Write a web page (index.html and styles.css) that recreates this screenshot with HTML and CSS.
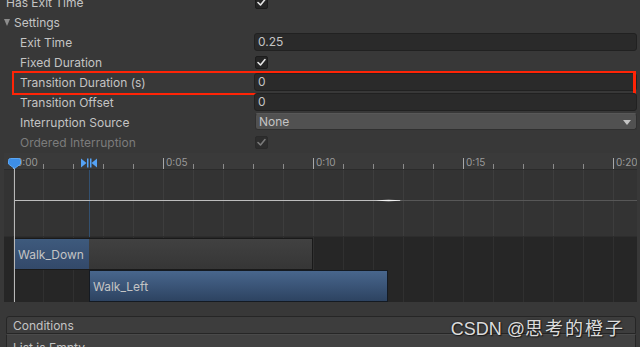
FILE: index.html
```html
<!DOCTYPE html>
<html lang="en">
<head>
    <meta charset="UTF-8">
    <title>Transition Inspector</title>
    <link rel="stylesheet" href="styles.css">
</head>
<body>
    <div class="inspector">
        <div class="row">
            <span class="label label-root">Has Exit Time</span>
            <span class="value">
                <span class="check"><svg width="11" height="11" viewBox="0 0 11 11"><polyline points="2,5.5 4.5,8 9,2.5" /></svg></span>
            </span>
        </div>
        <div class="row">
            <span class="label label-fold"><span class="fold"></span>Settings</span>
        </div>
        <div class="row">
            <span class="label">Exit Time</span>
            <span class="value"><span class="field">0.25</span></span>
        </div>
        <div class="row">
            <span class="label">Fixed Duration</span>
            <span class="value">
                <span class="check"><svg width="11" height="11" viewBox="0 0 11 11"><polyline points="2,5.5 4.5,8 9,2.5" /></svg></span>
            </span>
        </div>
        <div class="row highlight">
            <span class="label">Transition Duration (s)</span>
            <span class="value"><span class="field">0</span></span>
        </div>
        <div class="row">
            <span class="label">Transition Offset</span>
            <span class="value"><span class="field">0</span></span>
        </div>
        <div class="row">
            <span class="label">Interruption Source</span>
            <span class="value"><span class="dropdown">None<span class="caret"></span></span></span>
        </div>
        <div class="row disabled">
            <span class="label">Ordered Interruption</span>
            <span class="value">
                <span class="check"><svg width="11" height="11" viewBox="0 0 11 11"><polyline points="2,5.5 4.5,8 9,2.5" /></svg></span>
            </span>
        </div>
    </div>

    <div class="timeline">
        <div class="ruler">
            <svg width="633" height="16" viewBox="0 0 633 16">
                <g class="ticks">
                    <line x1="39.5" y1="11" x2="39.5" y2="16" />
                    <line x1="69.5" y1="11" x2="69.5" y2="16" />
                    <line x1="99.5" y1="11" x2="99.5" y2="16" />
                    <line x1="129.5" y1="11" x2="129.5" y2="16" />
                    <line x1="189.5" y1="11" x2="189.5" y2="16" />
                    <line x1="219.5" y1="11" x2="219.5" y2="16" />
                    <line x1="249.5" y1="11" x2="249.5" y2="16" />
                    <line x1="279.5" y1="11" x2="279.5" y2="16" />
                    <line x1="339.5" y1="11" x2="339.5" y2="16" />
                    <line x1="369.5" y1="11" x2="369.5" y2="16" />
                    <line x1="399.5" y1="11" x2="399.5" y2="16" />
                    <line x1="429.5" y1="11" x2="429.5" y2="16" />
                    <line x1="489.5" y1="11" x2="489.5" y2="16" />
                    <line x1="519.5" y1="11" x2="519.5" y2="16" />
                    <line x1="549.5" y1="11" x2="549.5" y2="16" />
                    <line x1="579.5" y1="11" x2="579.5" y2="16" />
                </g>
                <g class="majors">
                    <line x1="9.5" y1="5" x2="9.5" y2="16" />
                    <line x1="159.5" y1="5" x2="159.5" y2="16" />
                    <line x1="309.5" y1="5" x2="309.5" y2="16" />
                    <line x1="459.5" y1="5" x2="459.5" y2="16" />
                    <line x1="609.5" y1="5" x2="609.5" y2="16" />
                </g>
                <g class="tick-labels">
                    <text x="12" y="13">0:00</text>
                    <text x="162" y="13">0:05</text>
                    <text x="312" y="13">0:10</text>
                    <text x="462" y="13">0:15</text>
                    <text x="612" y="13">0:20</text>
                </g>
                <g class="marks">
                    <path d="M77 5.5 L82.5 10 L77 14.5 Z" />
                    <rect x="83" y="5.5" width="1.5" height="9" />
                    <rect x="86" y="5.5" width="1.5" height="9" />
                    <path d="M93 5.5 L87.5 10 L93 14.5 Z" />
                </g>
            </svg>
        </div>
        <div class="curve">
            <svg width="633" height="67" viewBox="0 0 633 67">
                <line class="blend" x1="85.5" y1="0" x2="85.5" y2="67" />
                <line class="curve-dim" x1="10" y1="30.5" x2="633" y2="30.5" />
                <line class="curve-main" x1="10" y1="30.5" x2="396" y2="30.5" />
                <path class="curve-peak" d="M372 30.5 Q384 28.8 398 30.5 Q384 31.8 372 30.5 Z" />
            </svg>
        </div>
        <div class="tracks">
            <div class="track">
                <div class="clip clip-down"><span class="clip-head">Walk_Down</span></div>
            </div>
            <div class="track">
                <div class="clip clip-left">Walk_Left</div>
            </div>
        </div>
        <div class="playhead"></div>
        <svg class="playhead-knob" width="13" height="11" viewBox="0 0 13 11">
            <path d="M0.5 2.5 Q0.5 0.5 2.5 0.5 H10.5 Q12.5 0.5 12.5 2.5 V6 L6.5 10.5 L0.5 6 Z" />
        </svg>
    </div>

    <div class="list">
        <div class="list-header">Conditions</div>
        <div class="list-body">List is Empty</div>
    </div>

    <div class="watermark">CSDN @<span class="cjk">思考的橙子</span></div>
</body>
</html>
```

FILE: styles.css
```css
* {
    margin: 0;
    padding: 0;
    box-sizing: border-box;
}
body {
    position: relative;
    width: 640px;
    height: 347px;
    overflow: hidden;
    background-color: #383838;
    font-family: Inter, "Noto Sans", sans-serif;
    font-size: 12px;
    color: #c4c4c4;
}
.inspector {
    margin-top: -8px;
}
.row {
    position: relative;
    display: flex;
    align-items: center;
    height: 20px;
}
.label {
    width: 254px;
    padding-left: 20px;
    white-space: nowrap;
}
.label-root {
    padding-left: 6px;
}
.label-fold {
    display: flex;
    align-items: center;
    gap: 4px;
    padding-left: 4px;
}
.fold {
    width: 0;
    height: 0;
    border-left: 3.5px solid transparent;
    border-right: 3.5px solid transparent;
    border-top: 7px solid #8d8d8d;
}
.value {
    flex: 1;
    display: flex;
    align-items: center;
    margin-right: 3px;
}
.field {
    flex: 1;
    height: 18px;
    padding-left: 3px;
    line-height: 16px;
    background-color: #2a2a2a;
    border: 1px solid #212121;
    border-radius: 3px;
}
.check {
    display: flex;
    align-items: center;
    justify-content: center;
    width: 13px;
    height: 13px;
    margin-left: 1px;
    background-color: #252525;
    border: 1px solid #1c1c1c;
    border-radius: 2px;
}
.check polyline {
    fill: none;
    stroke: #e4e4e4;
    stroke-width: 1.6;
    stroke-linecap: round;
    stroke-linejoin: round;
}
.dropdown {
    position: relative;
    flex: 1;
    height: 17px;
    margin-left: 1px;
    margin-top: -1px;
    padding-left: 3px;
    line-height: 15px;
    background-color: #515151;
    border: 1px solid #303030;
    border-top-color: #585858;
    border-radius: 3px;
}
.caret {
    position: absolute;
    right: 5px;
    top: 6px;
    width: 0;
    height: 0;
    border-left: 4px solid transparent;
    border-right: 4px solid transparent;
    border-top: 5px solid #c4c4c4;
}
.disabled .label {
    color: #7c7c7c;
}
.disabled .check {
    background-color: #2d2d2d;
    border-color: #2a2a2a;
}
.disabled .check polyline {
    stroke: #7a7a7a;
}
.highlight::after {
    content: "";
    position: absolute;
    left: 12px;
    right: 4px;
    top: -1px;
    bottom: -3px;
    border: 2px solid #ff2406;
    border-right-width: 3px;
}

.timeline {
    position: relative;
    margin: 1px 3px 0 4px;
}
.ruler {
    height: 17px;
    background-color: #3a3a3a;
    border-bottom: 1px solid #2b2b2b;
}
.ruler svg {
    display: block;
}
.ticks line {
    stroke: #8a8a8a;
    stroke-width: 1;
}
.majors line {
    stroke: #a8a8a8;
    stroke-width: 1;
}
.tick-labels text {
    font-family: Inter, "Noto Sans", sans-serif;
    font-size: 10px;
    fill: #999999;
}
.marks {
    fill: #55a2f5;
}
.curve {
    height: 67px;
    background-color: #333333;
    background-image: linear-gradient(to right, #3d3d3d 0 1px, transparent 1px);
    background-size: 30px 100%;
    background-position: 9px 0;
    border-bottom: 1px solid #2d2d2d;
}
.curve svg {
    display: block;
}
.blend {
    stroke: #33506f;
    stroke-width: 1;
}
.curve-dim {
    stroke: #575757;
    stroke-width: 1.2;
}
.curve-main {
    stroke: #bdbdbd;
    stroke-width: 1.2;
}
.curve-peak {
    fill: #f2f2f2;
}
.tracks {
    height: 65px;
    background-color: #262626;
    background-image: linear-gradient(to right, #303030 0 1px, transparent 1px);
    background-size: 30px 100%;
    background-position: 9px 0;
}
.track {
    display: flex;
    height: 33px;
    padding-top: 1px;
}
.track + .track {
    height: 32px;
    padding-top: 0;
}
.clip {
    height: 32px;
    display: flex;
    align-items: center;
    border: 1px solid #1a1a1a;
    white-space: nowrap;
}
.clip-down {
    width: 298px;
    margin-left: 11px;
    background: linear-gradient(#414141, #363636);
    border-left: none;
}
.clip-head {
    display: flex;
    align-items: center;
    width: 74px;
    height: 100%;
    padding-left: 3px;
    background: linear-gradient(#3e5a7d, #33496a);
}
.clip-left {
    width: 299px;
    margin-left: 85px;
    padding-left: 3px;
    background: linear-gradient(#48668d, #2d4361);
    border-color: #141a22;
}
.playhead {
    position: absolute;
    left: 10px;
    top: 15px;
    bottom: 0;
    width: 1px;
    background-color: #b8b8b8;
}
.playhead-knob {
    position: absolute;
    left: 4px;
    top: 5px;
}
.playhead-knob path {
    fill: #3d8ee6;
    stroke: #5aa6f5;
    stroke-width: 1;
}

.list {
    margin: 14px 4px 0 6px;
}
.list-header {
    height: 18px;
    padding: 1px 0 0 6px;
    line-height: 16px;
    background-color: #3d3d3d;
    border: 1px solid #262626;
    border-radius: 3px 3px 0 0;
}
.list-body {
    height: 20px;
    padding: 5px 0 0 6px;
    background-color: #414141;
    border: 1px solid #262626;
    border-top: 1px solid #4a4a4a;
}
.watermark {
    position: absolute;
    right: 15px;
    top: 314px;
    font-family: "Liberation Sans", "Noto Sans CJK SC", sans-serif;
    font-size: 18px;
    color: #dcdcdc;
    text-shadow: 0 0 2px #1c1c1c, 1px 1px 1px #1c1c1c;
}
.cjk {
    letter-spacing: 2px;
}
```
